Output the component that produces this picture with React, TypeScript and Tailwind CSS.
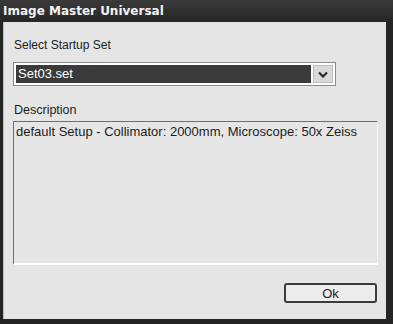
import React from "react";

export default function App() {
  return (
    <div
      className="w-[393px] h-[324px] flex flex-col bg-[#242424] overflow-hidden"
      style={{ fontFamily: '"Liberation Sans", Arial, sans-serif' }}
    >
      <div className="h-[22px] shrink-0 flex items-center pl-[3px] pb-[1px] bg-gradient-to-b from-[#3a3a3a] to-[#262626]">
        <span
          className="text-[12px] font-bold text-[#f2f2f2] leading-none"
          style={{ fontFamily: '"DejaVu Sans", Verdana, sans-serif' }}
        >
          Image Master Universal
        </span>
      </div>
      <div className="flex-1 flex flex-col ml-[3px] mr-[7px] mb-[5px] bg-[#e5e5e5] border-l border-[#bdbdbd] pl-[9px] pr-[8px]">
        <div className="mt-[16px] text-[12px] leading-[14px] text-[#1c1c1c] pl-[1px]">
          Select Startup Set
        </div>
        <div className="mt-[10px] w-[323px] h-[24px] flex items-center border border-[#8a8a8a] bg-white p-[2px] gap-[2px]">
          <div className="flex-1 h-full bg-[#3a3a3a] flex items-center pl-[2px] text-[13px] text-white">
            Set03.set
          </div>
          <div className="w-[20px] h-full bg-[#dadada] border border-[#bcbcbc] flex items-center justify-center">
            <svg width="10" height="7" viewBox="0 0 10 7">
              <path d="M1 1.5 L5 5.5 L9 1.5" stroke="#2a2a2a" strokeWidth="2.2" fill="none" />
            </svg>
          </div>
        </div>
        <div className="mt-[17px] text-[12.5px] leading-[14px] text-[#1c1c1c] pl-[1px]">
          Description
        </div>
        <div className="mt-[4px] w-[365px] h-[144px] border-t border-l border-[#6e6e6e] border-b-2 border-b-white border-r border-r-[#f4f4f4] bg-[#e6e6e6] pl-[2px] pt-[2px] text-[13px] leading-[15px] text-[#1c1c1c]">
          default Setup - Collimator: 2000mm, Microscope: 50x Zeiss
        </div>
        <div className="flex justify-end mt-[18px] pr-[1px]">
          <button className="w-[93px] h-[20px] rounded-[3px] border-2 border-[#3c3c3c] bg-[#ececec] text-[13px] leading-none text-[#1c1c1c] flex items-center justify-center">
            Ok
          </button>
        </div>
      </div>
    </div>
  );
}
